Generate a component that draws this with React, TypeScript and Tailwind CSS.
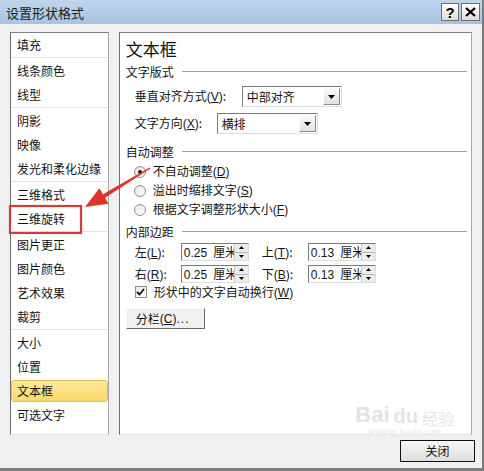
import React from "react";

const items: (string | null)[] = [
  "填充",
  null,
  "线条颜色",
  "线型",
  null,
  "阴影",
  "映像",
  "发光和柔化边缘",
  null,
  "三维格式",
  "三维旋转",
  null,
  "图片更正",
  "图片颜色",
  "艺术效果",
  "裁剪",
  null,
  "大小",
  "位置",
  "文本框",
  "可选文字",
];

function Acc({ k }: { k: string }) {
  return (
    <span className="font-['Liberation_Sans',sans-serif]">
      (<span className="underline underline-offset-1">{k}</span>)
    </span>
  );
}

function Section({ title }: { title: string }) {
  return (
    <div className="flex items-center h-[16px]">
      <span className="leading-[16px]">{title}</span>
      <div className="ml-[8px] mr-[4px] flex-1 border-t border-[#a0a0a0] border-b border-b-white" />
    </div>
  );
}

function Select({ w, text }: { w: string; text: string }) {
  return (
    <div
      className={`${w} h-[21px] bg-white border border-t-[#7a7a7a] border-l-[#7a7a7a] border-r-[#dcdcdc] border-b-[#dcdcdc] flex items-center`}
    >
      <span className="pl-[4px] flex-1 leading-none">{text}</span>
      <div className="w-[17px] h-[17px] mr-[1px] bg-gradient-to-b from-[#fafafa] to-[#e2e2e2] border border-t-white border-l-white border-r-[#8a8a8a] border-b-[#8a8a8a] flex items-center justify-center">
        <svg width="7" height="4" viewBox="0 0 7 4">
          <path d="M0 0H7L3.5 4Z" fill="#000" />
        </svg>
      </div>
    </div>
  );
}

function Spin({ v }: { v: string }) {
  return (
    <div className="relative w-[68px] h-[18px] bg-white border border-t-[#7a7a7a] border-l-[#7a7a7a] border-r-[#dcdcdc] border-b-[#dcdcdc] flex items-center overflow-hidden">
      <div className="flex-1 whitespace-nowrap pl-[2px] leading-none">
        <span className="font-['Liberation_Sans',sans-serif]">{v}</span>
        <span className="ml-[6px]">厘米</span>
      </div>
      <div className="absolute right-0 top-0 w-[14px] h-[16px] flex flex-col bg-[#ececec] border-l border-[#c8c8c8]">
        <div className="flex-1 flex items-center justify-center border-b border-[#b8b8b8]">
          <svg width="5" height="3" viewBox="0 0 5 3">
            <path d="M0 3H5L2.5 0Z" fill="#000" />
          </svg>
        </div>
        <div className="flex-1 flex items-center justify-center">
          <svg width="5" height="3" viewBox="0 0 5 3">
            <path d="M0 0H5L2.5 3Z" fill="#000" />
          </svg>
        </div>
      </div>
    </div>
  );
}

function Radio({ checked, children }: { checked?: boolean; children: React.ReactNode }) {
  return (
    <div className="h-[19px] flex items-center pl-[8px]">
      <div className="w-[12px] h-[12px] rounded-full border border-[#8f8f8f] bg-gradient-to-br from-[#e6e6e6] to-white flex items-center justify-center">
        {checked && <div className="w-[4px] h-[4px] rounded-full bg-[#111]" />}
      </div>
      <span className="ml-[7px] leading-none">{children}</span>
    </div>
  );
}

export default function App() {
  return (
    <div className="relative w-[484px] h-[471px] bg-[#f0f0f0] border-r-[2px] border-b-[3px] border-[#7c7c7c] flex flex-col font-['Noto_Sans_CJK_SC',sans-serif] text-[12px] text-[#141414] overflow-hidden">
      {/* title bar */}
      <div className="h-[24px] shrink-0 bg-gradient-to-b from-[#bfd5ec] to-[#a8c3e2] flex items-center pl-[6px] pr-[2px]">
        <span className="text-[13px] text-[#1c1c1c] leading-none">设置形状格式</span>
        <div className="ml-auto flex gap-[2px]">
          <div className="w-[18px] h-[18px] border border-[#6f6f6f] bg-gradient-to-b from-white to-[#dcdcdc] flex items-center justify-center font-['Liberation_Sans',sans-serif] font-bold text-[15px] leading-none text-black">
            ?
          </div>
          <div className="w-[19px] h-[18px] border border-[#6f6f6f] bg-gradient-to-b from-white to-[#dcdcdc] flex items-center justify-center">
            <svg width="11" height="10" viewBox="0 0 11 10">
              <path d="M1 1L10 9M10 1L1 9" stroke="#000" strokeWidth="2.2" />
            </svg>
          </div>
        </div>
      </div>

      {/* body */}
      <div className="flex px-[10px] pt-[8px] gap-[10px]">
        {/* left list */}
        <div className="w-[99px] h-[403px] bg-white border border-t-[#7f7f7f] border-l-[#6f6f6f] border-r-[#a8a8a8] border-b-[#e2e2e2] flex flex-col">
          {items.map((it, i) =>
            it === null ? (
              <div key={i} className="h-[2px] border-t border-[#e4e4e4] bg-white" />
            ) : it === "文本框" ? (
              <div key={i} className="h-[24px] py-[1px]">
                <div className="h-[22px] rounded-[3px] border border-[#e3bf52] bg-gradient-to-b from-[#fdeaa0] to-[#fbd969] flex items-center pl-[5px] leading-none">
                  {it}
                </div>
              </div>
            ) : (
              <div key={i} className="h-[24px] flex items-center pl-[6px] leading-none">
                {it}
              </div>
            )
          )}
        </div>

        {/* right panel */}
        <div className="w-[354px] h-[403px] bg-white border border-t-[#7f7f7f] border-l-[#6f6f6f] border-r-[#a8a8a8] border-b-[#e2e2e2] flex flex-col pl-[6px] pt-[5px]">
          <div className="h-[22px] text-[17px] leading-[22px] text-[#111]">文本框</div>
          <div className="mt-[4px]">
            <Section title="文字版式" />
          </div>
          <div className="mt-[6px] flex items-center pl-[9px]">
            <span className="w-[107px] leading-none">
              垂直对齐方式<Acc k="V" />:
            </span>
            <Select w="w-[100px]" text="中部对齐" />
          </div>
          <div className="mt-[6px] flex items-center pl-[9px]">
            <span className="w-[82px] leading-none">
              文字方向<Acc k="X" />:
            </span>
            <Select w="w-[101px]" text="横排" />
          </div>
          <div className="mt-[10px]">
            <Section title="自动调整" />
          </div>
          <div className="mt-[2px] flex flex-col">
            <Radio checked>
              不自动调整<Acc k="D" />
            </Radio>
            <Radio>
              溢出时缩排文字<Acc k="S" />
            </Radio>
            <Radio>
              根据文字调整形状大小<Acc k="F" />
            </Radio>
          </div>
          <div className="mt-[5px]">
            <Section title="内部边距" />
          </div>
          <div className="mt-[3px] flex items-center pl-[9px]">
            <span className="w-[46px] leading-none">
              左<Acc k="L" />:
            </span>
            <Spin v="0.25" />
            <span className="ml-[13px] w-[46px] leading-none">
              上<Acc k="T" />:
            </span>
            <Spin v="0.13" />
          </div>
          <div className="mt-[4px] flex items-center pl-[9px]">
            <span className="w-[46px] leading-none">
              右<Acc k="R" />:
            </span>
            <Spin v="0.25" />
            <span className="ml-[13px] w-[46px] leading-none">
              下<Acc k="B" />:
            </span>
            <Spin v="0.13" />
          </div>
          <div className="mt-[1px] h-[16px] flex items-center pl-[9px]">
            <div className="w-[12px] h-[12px] border border-[#8f8f8f] bg-gradient-to-br from-[#e6e6e6] to-white flex items-center justify-center">
              <svg width="9" height="8" viewBox="0 0 9 8">
                <path d="M1 4L3.5 6.5L8 1" stroke="#111" strokeWidth="1.8" fill="none" />
              </svg>
            </div>
            <span className="ml-[7px] leading-none">
              形状中的文字自动换行<Acc k="W" />
            </span>
          </div>
          <div className="mt-[8px]">
            <div className="w-[79px] h-[21px] bg-[#f0f0f0] border border-t-white border-l-white border-r-[#6a6a6a] border-b-[#6a6a6a] flex items-center pl-[9px] leading-none">
              分栏<Acc k="C" />
              <span className="font-['Liberation_Sans',sans-serif] tracking-[1px]">...</span>
            </div>
          </div>
        </div>
      </div>

      {/* bottom */}
      <div className="flex justify-end pr-[7px] mt-[5px] relative">
        <div className="absolute right-[28px] -top-[36px] flex flex-col items-center leading-none pointer-events-none">
          <div className="flex items-end gap-[4px]">
            <span className="font-['Liberation_Sans',sans-serif] font-bold text-[22px] text-[#e4e4e4]">Bai</span>
            <span className="font-['Liberation_Sans',sans-serif] font-bold text-[20px] text-[#e4e4e4]">du</span>
            <span className="text-[16px] text-[#e6e6e6]">经验</span>
          </div>
          <span className="font-['Liberation_Sans',sans-serif] text-[9px] text-[#e8e8e8] mt-[2px]">jingyan.baidu.com</span>
        </div>
        <div className="relative w-[75px] h-[22px] border border-[#111] bg-gradient-to-b from-[#f6f6f6] to-[#dedede] flex items-center justify-center leading-none">
          关闭
        </div>
      </div>

      {/* annotation overlay */}
      <svg className="absolute left-0 top-0 pointer-events-none" width="484" height="471" viewBox="0 0 484 471">
        <rect x="10" y="206" width="71" height="27" fill="none" stroke="#d23b3b" strokeWidth="2.2" />
        <polygon
          points="149.5,167.4 103,194.3 99.4,188.3 85,207 108.6,203.7 105,197.7 150.5,168.6"
          fill="#e0332c"
        />
      </svg>
    </div>
  );
}
